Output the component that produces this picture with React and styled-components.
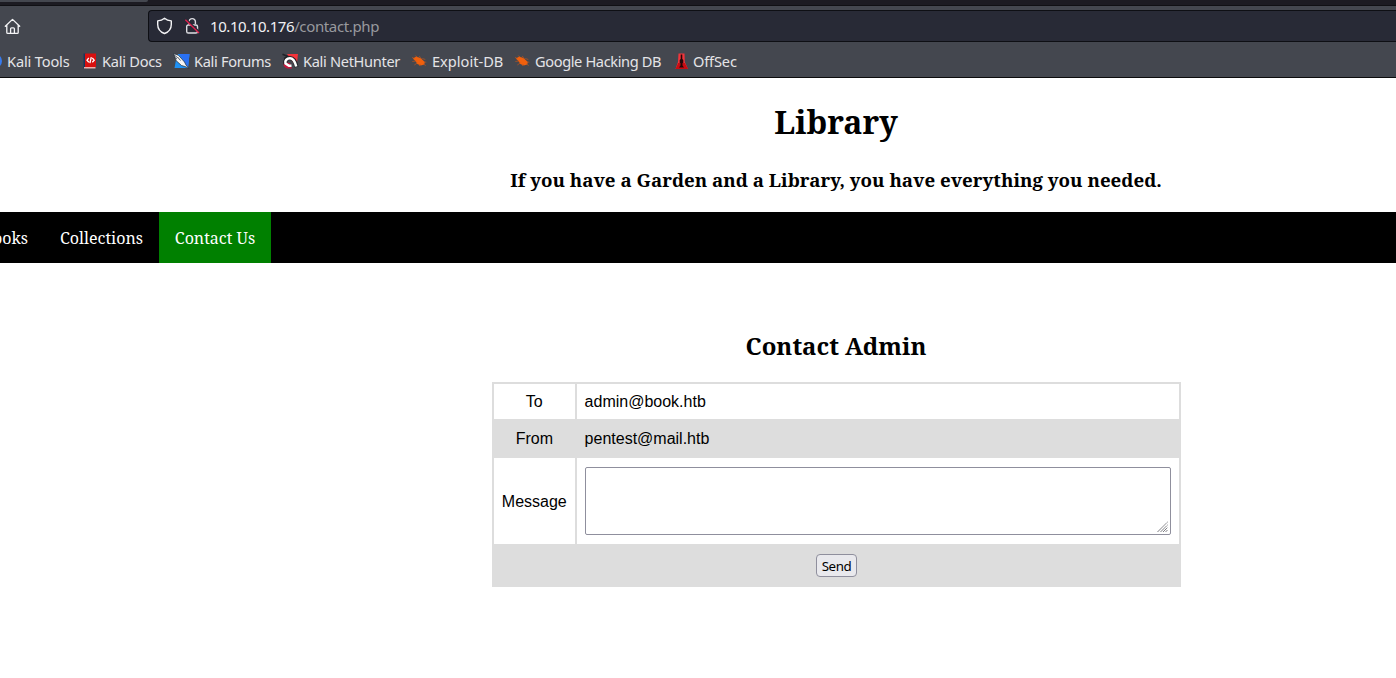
import React from "react";
import styled, { createGlobalStyle } from "styled-components";

const serif = `"Noto Serif", "DejaVu Serif Condensed", "DejaVu Serif", serif`;
const ui = `"Noto Sans", "Open Sans", sans-serif`;

const GlobalStyle = createGlobalStyle`
  * { box-sizing: border-box; }
  body { margin: 0; background: #fff; overflow: hidden; }
`;

const Window = styled.div`
  width: 1396px;
  height: 678px;
  overflow: hidden;
  background: #fff;
  color: #000;
`;

const Chrome = styled.header`
  height: 78px;
  background: #44474f;
  border-bottom: 1px solid #0c0c0d;
`;

const TabStrip = styled.div`
  height: 6px;
  background: #1c1b22;
  border-bottom: 1px solid #101014;
`;

const ActiveTab = styled.div`
  width: 148px;
  height: 2px;
  background: #44474f;
  border-radius: 0 0 2px 0;
`;

const Toolbar = styled.div`
  display: flex;
  height: 40px;
  padding-top: 4px;
`;

const HomeSlot = styled.div`
  width: 148px;
  padding: 8px 0 0 4px;
  svg { display: block; }
`;

const UrlBar = styled.div`
  flex: 1;
  height: 32px;
  display: flex;
  align-items: center;
  padding-left: 7px;
  background: #282a36;
  border: 1px solid #0e0f14;
  border-right: 0;
  border-radius: 4px 0 0 4px;
  svg { flex: none; margin-right: 11px; }
  svg + svg { margin-right: 10px; }
`;

const Url = styled.span`
  font: 15px/20px ${ui};
  letter-spacing: ${(p) => (p.$dim ? -0.36 : -0.43)}px;
  color: ${(p) => (p.$dim ? "#98999e" : "#f1f1f4")};
`;

const Bookmarks = styled.nav`
  display: flex;
  height: 30px;
`;

const Bookmark = styled.div`
  display: flex;
  align-items: center;
  width: ${(p) => p.$width}px;
  flex: none;
  white-space: nowrap;
  font: 14.6px/20px ${ui};
  letter-spacing: ${(p) => p.$spacing || 0}px;
  color: #e4e4e7;
  svg { flex: none; margin-right: 4px; }
`;

const Masthead = styled.div`
  height: 134px;
  margin-left: 276px;
  display: flex;
  flex-direction: column;
  align-items: center;
  font-family: ${serif};
  font-weight: 700;
`;

const Title = styled.h1`
  margin: 22px 0 0;
  font-size: 32px;
  line-height: 44px;
`;

const Motto = styled.h3`
  margin: 23px 0 0;
  font-size: 18.72px;
  line-height: 26px;
  white-space: nowrap;
`;

const Menu = styled.nav`
  height: 51px;
  display: flex;
  background: #000;
`;

const MenuItem = styled.div`
  width: ${(p) => p.$width}px;
  display: flex;
  align-items: center;
  justify-content: ${(p) => (p.$end ? "flex-end" : "center")};
  padding: 0 ${(p) => (p.$end ? 16 : 0)}px 0 0;
  white-space: nowrap;
  background: ${(p) => (p.$active ? "#008000" : "transparent")};
  color: #fff;
  font: 16px/22px ${serif};
`;

const Content = styled.main`
  margin-left: 276px;
  padding-top: 66px;
  display: flex;
  flex-direction: column;
  align-items: center;
`;

const Heading = styled.h2`
  margin: 0 0 20px;
  font: 700 24px/33px ${serif};
`;

const Form = styled.form`
  width: 689px;
  display: grid;
  grid-template-columns: 81px 602px;
  grid-template-rows: 35px 35px 86px 39px;
  gap: 2px;
  padding: 2px;
  margin-left: 1px;
  background: #ddd;
  font: 16px/18px "Liberation Sans", Arial, sans-serif;
`;

const Cell = styled.div`
  display: flex;
  align-items: center;
  justify-content: ${(p) => (p.$center ? "center" : "flex-start")};
  padding: ${(p) => (p.$low ? 1 : 0)}px 8px 0 ${(p) => (p.$text ? 7.6 : 8)}px;
  background: ${(p) => (p.$shaded ? "#ddd" : "#fff")};
  grid-column: ${(p) => (p.$full ? "1 / -1" : "auto")};
`;

const Message = styled.div`
  width: 586px;
  height: 68px;
  flex: none;
  display: flex;
  justify-content: flex-end;
  align-items: flex-end;
  padding: 1px;
  background: #fff;
  border: 1px solid #8f8f9d;
  border-radius: 2px;
`;

const Send = styled.button`
  width: 41px;
  height: 23px;
  padding: 0;
  background: #e9e9ed;
  border: 1px solid #8f8f9d;
  border-radius: 4px;
  color: #000;
  font: 13.33px/20px ${ui};
  letter-spacing: -0.4px;
`;

const HomeIcon = () => (
  <svg width="17" height="17" viewBox="0 0 17 17" fill="none" stroke="#f4f4f6" strokeWidth="1.3" strokeLinejoin="round" strokeLinecap="round">
    <path d="M1.3 8.2 8.5 1.4l7.2 6.8M2.8 7v7.4c0 .6.4 1 1 1h9.4c.6 0 1-.4 1-1V7M6.6 15.2v-4.4c0-.6.4-1 1-1h1.8c.6 0 1 .4 1 1v4.4" />
  </svg>
);

const ShieldIcon = () => (
  <svg width="17" height="18" viewBox="0 0 17 18" fill="none" stroke="#f4f4f6" strokeWidth="1.4" strokeLinejoin="round">
    <path d="M8.500 1.300C10.500 3 12.700 3.700 15.300 3.900v3.500c0 4.200-2.600 7.500-6.800 9.100-4.200-1.600-6.800-4.900-6.800-9.100V3.900C4.300 3.700 6.500 3 8.500 1.300z" />
  </svg>
);

const LockIcon = () => (
  <svg width="16" height="18" viewBox="0 0 16 18" fill="none" stroke="#dedee3" strokeWidth="1.4">
    <path d="M5 7V4.800a3.200 3.200 0 0 1 6.400 0V7M4.300 8h7.600c1 0 1.600.6 1.600 1.600v4.800c0 1-.6 1.600-1.600 1.600H4.300c-1 0-1.600-.6-1.600-1.600V9.600C2.700 8.600 3.300 8 4.300 8z" />
    <path d="M2.800 3 15 14.800" stroke="#282a36" strokeWidth="2" />
    <path d="M1.400 2.800 15 16" stroke="#e2204e" strokeWidth="1.300" />
  </svg>
);

const ToolsIcon = () => (
  <svg width="3" height="16" viewBox="0 0 3 16"><circle cx="-5" cy="8" r="7" fill="#367bf0" /></svg>
);

const DocsIcon = () => (
  <svg width="16" height="16" viewBox="0 0 16 16">
    <path d="M1.500.5h2.500v15H1.500z" fill="#17365c" />
    <path d="M3 .5h11v13.500H3z" fill="#d8100f" />
    <path d="M2 14h11.500v1.500H2z" fill="#f0b0ac" />
    <path d="M6.800 5 5 7.200l1.800 2M10.300 5l1.900 2.200-1.900 2.100M9.300 4.200 7.900 10.200" fill="none" stroke="#fff" strokeWidth="1.300" />
  </svg>
);

const ForumsIcon = () => (
  <svg width="17" height="16" viewBox="0 0 17 16">
    <path d="M5 1h11.500L15 15H1.500L3 7z" fill="#1e91f5" />
    <path d="M6 1h10.500L15 15z" fill="#2a70f2" />
    <path d="m.5.5 5 1.800 6 6.700 1.500 3 3 3.500-4-2-3.500-1L3 7.500z" fill="#f5f5f5" stroke="#202833" strokeWidth=".7" />
    <path d="m4.500 4 3 3.500M.5 1.500l4 3M1 4l3 2" stroke="#303846" strokeWidth=".8" fill="none" />
  </svg>
);

const HunterIcon = () => (
  <svg width="17" height="16" viewBox="0 0 17 16">
    <path d="M5 1h11l-1.500 13L9 7z" fill="#f3333a" />
    <path d="m.5 1.200 6 2.600M2 5.500 5 4" stroke="#202228" strokeWidth="1.600" />
    <path d="M1 9c0 4 2 6.500 5.500 6.500H10L8 10z" fill="#c5163c" />
    <path d="M3.500 11C2.300 8 4.500 5.200 8 5.200c3.500 0 5.500 3.800 6.500 9" fill="none" stroke="#202228" strokeWidth="4.200" />
    <path d="M9.500 12.800H7L3.500 10.500C2.500 7.500 4.800 5.300 8 5.300c3 0 4.800 2.700 6.200 8.200" fill="none" stroke="#fff" strokeWidth="2.600" />
  </svg>
);

const BugIcon = () => (
  <svg width="16" height="16" viewBox="0.7 0 16 16">
    <path d="M1.500 5.500 5 3.500l4.500 1.800L13.500 9l-.5 2.500-3.500 1L6 11 4.500 8.500z" fill="#f0600d" />
    <path d="m0 4 3 1.500M4 2.500l2 2M8 3l2 3M11 5.500l3 1M13 9l2 .2M1 8.500 5 8M3 12l3-2M8 13l1-2M12 11l2.500 1.500" stroke="#bd541c" strokeWidth=".7" />
  </svg>
);

const OffSecIcon = () => (
  <svg width="14" height="17" viewBox="0 0 14 17">
    <path d="M3.500.5h6l.3 8.500 3.200 7H.5L3 9z" fill="#f0353b" />
    <path d="M.5 16 3.200 10h6.600L13 16z" fill="#c80c12" />
    <path d="M5.700 1.500h1.600V6l1 1v3h-.8v2.500l1.500 2H4l1.500-2V10h-.8V7l1-1z" fill="#240608" />
  </svg>
);

const Grip = () => (
  <svg width="12" height="12" viewBox="0 0 12 12" fill="none" stroke="#66666c" strokeWidth="1">
    <path d="M.5 11 10.500 1M3.500 11l7-7M6 11l4.500-4.500M8.500 11l2-2" strokeDasharray="1.200 .3" />
  </svg>
);

export default function App() {
  return (
    <Window>
      <GlobalStyle />
      <Chrome>
        <TabStrip><ActiveTab /></TabStrip>
        <Toolbar>
          <HomeSlot><HomeIcon /></HomeSlot>
          <UrlBar>
            <ShieldIcon />
            <LockIcon />
            <span><Url>10.10.10.176</Url><Url $dim>/contact.php</Url></span>
          </UrlBar>
        </Toolbar>
        <Bookmarks>
          <Bookmark $width={82} $spacing={-0.15}><ToolsIcon />Kali Tools</Bookmark>
          <Bookmark $width={91} $spacing={-0.25}><DocsIcon />Kali Docs</Bookmark>
          <Bookmark $width={109} $spacing={-0.33}><ForumsIcon />Kali Forums</Bookmark>
          <Bookmark $width={130} $spacing={-0.32}><HunterIcon />Kali NetHunter</Bookmark>
          <Bookmark $width={103} $spacing={0}><BugIcon />Exploit-DB</Bookmark>
          <Bookmark $width={160} $spacing={-0.38}><BugIcon />Google Hacking DB</Bookmark>
          <Bookmark $width={80} $spacing={-0.15}><OffSecIcon />OffSec</Bookmark>
        </Bookmarks>
      </Chrome>
      <Masthead>
        <Title>Library</Title>
        <Motto>If you have a Garden and a Library, you have everything you needed.</Motto>
      </Masthead>
      <Menu>
        <MenuItem $width={44} $end>Books</MenuItem>
        <MenuItem $width={115}>Collections</MenuItem>
        <MenuItem $width={112} $active>Contact Us</MenuItem>
      </Menu>
      <Content>
        <Heading>Contact Admin</Heading>
        <Form>
          <Cell $center $text>To</Cell>
          <Cell $text>admin@book.htb</Cell>
          <Cell $center $text $shaded>From</Cell>
          <Cell $text $shaded>pentest@mail.htb</Cell>
          <Cell $center $text $low>Message</Cell>
          <Cell><Message><Grip /></Message></Cell>
          <Cell $center $shaded $full><Send type="button">Send</Send></Cell>
        </Form>
      </Content>
    </Window>
  );
}
